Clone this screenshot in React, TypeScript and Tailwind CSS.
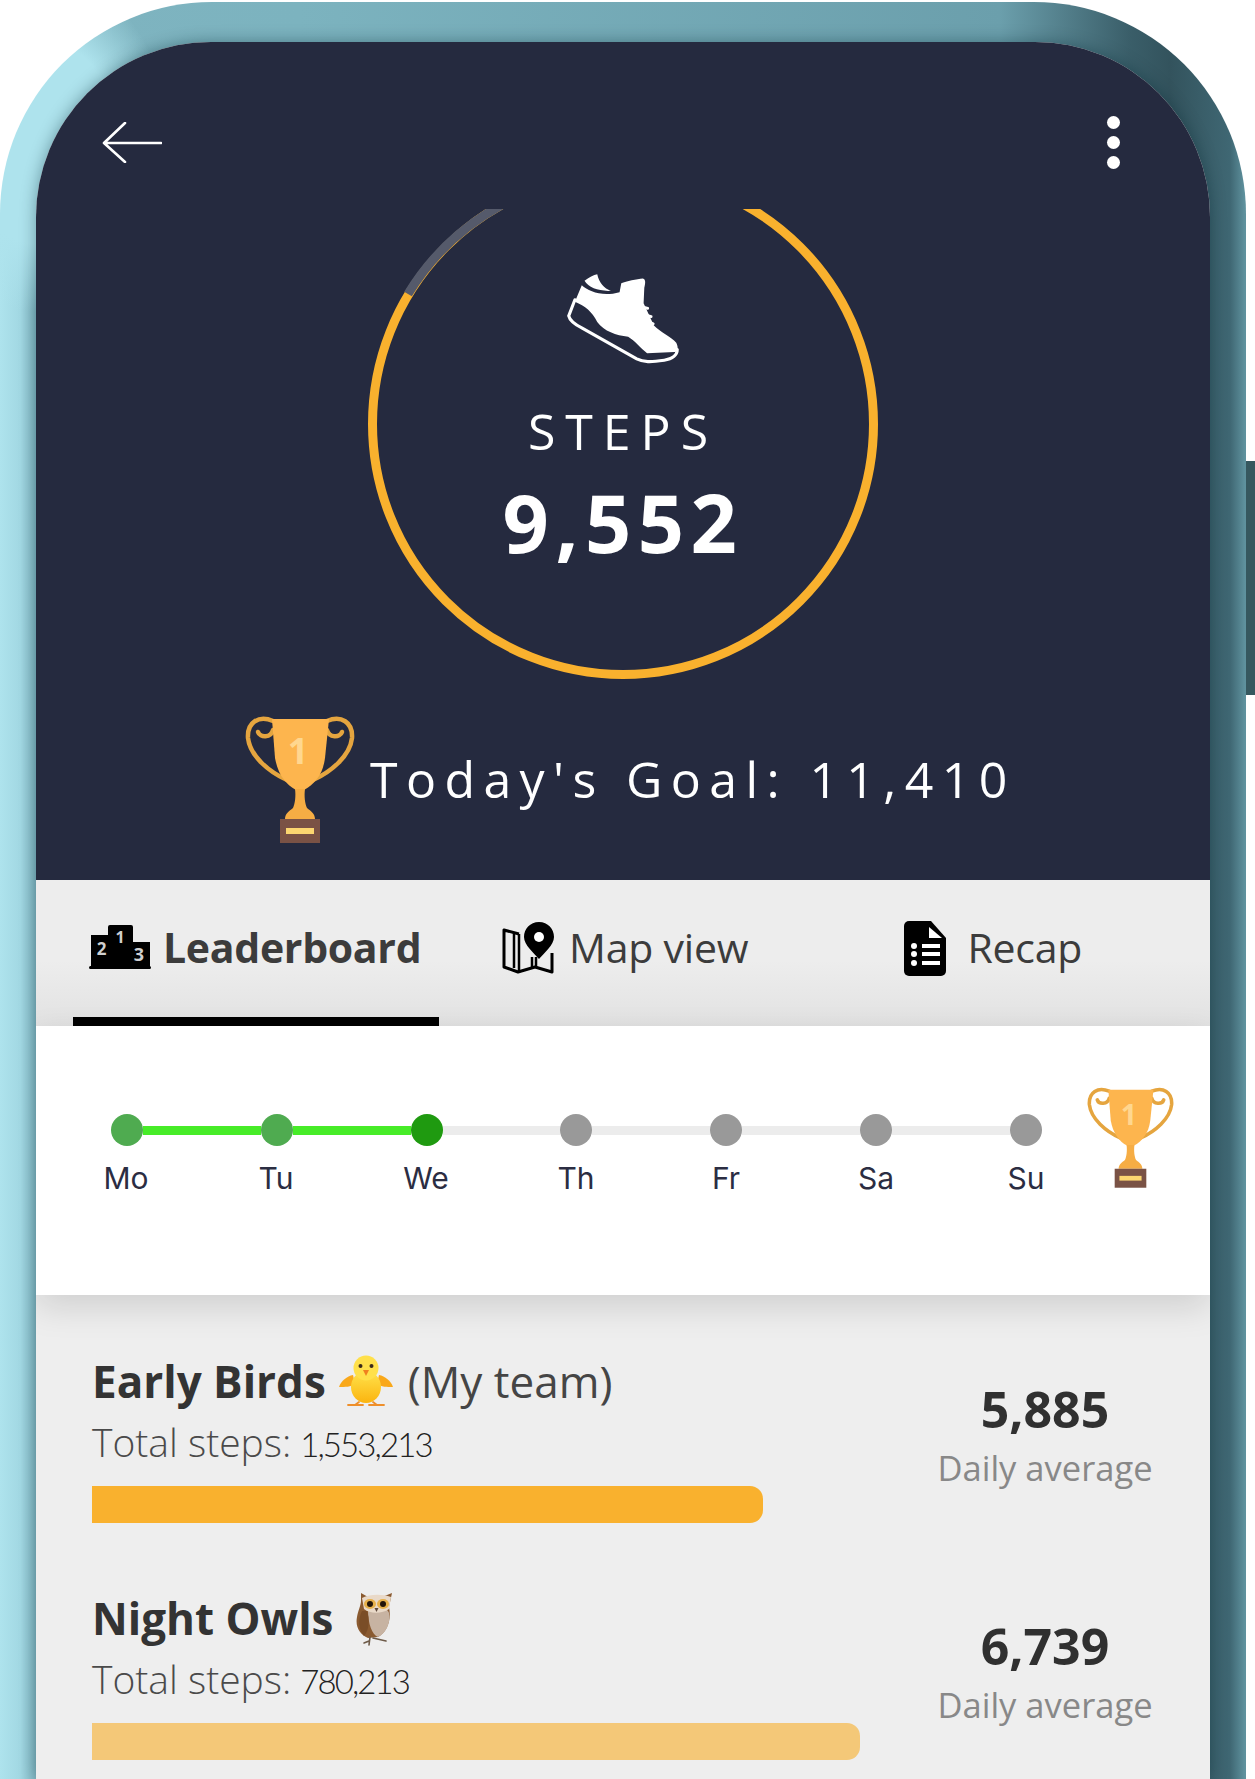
import React from "react";

function Trophy({ className }: { className?: string }) {
  return (
    <svg viewBox="0 0 110 127" className={className}>
      <g fill="none" stroke="#e5a53f" strokeWidth="4.5" strokeLinecap="round">
        <path d="M28 5 C14 -1 2 6 3 22 C5 40 24 56 42 64" />
        <path d="M28 14 C26 22 15 22 13 16" />
        <path d="M82 5 C96 -1 108 6 107 22 C105 40 86 56 68 64" />
        <path d="M82 14 C84 22 95 22 97 16" />
      </g>
      <path d="M27 3 H84 L80 42 C78 58 70 68 59 74 L51 74 C40 68 33 58 30 42 Z" fill="#fdb54e" />
      <path d="M50 73 H60 C59 80 60 88 62 92 C66 95 70 98 70 103 H40 C40 98 44 95 48 92 C50 88 51 80 50 73 Z" fill="#f6ad44" />
      <rect x="35" y="103" width="40" height="24" fill="#7a5245" />
      <rect x="41" y="112" width="28" height="6" fill="#fcd670" />
      <text x="53" y="48" textAnchor="middle" fontSize="36" fontWeight="700" fontFamily="'Open Sans',sans-serif" fill="#ffd78f">1</text>
    </svg>
  );
}

function Shoe() {
  return (
    <svg viewBox="618 225 324 262" className="w-[116px] h-[90px] -my-[1px] overflow-visible">
      <path d="M668 245 C680 235 695 228 705 226 C710 250 725 268 745 274 C710 276 680 265 668 245 Z" fill="#fff" />
      <path d="M660 258 C680 276 720 292 770 278 L775 252 C790 245 820 240 838 238 C846 240 846 250 842 265 L840 310 L870 375 C890 395 920 408 935 425 C942 440 940 450 930 452 L850 456 C830 440 815 420 795 408 C760 404 725 392 705 365 C690 335 670 318 640 306 Z" fill="#fff" />
      <path d="M640 300 L622 347 C625 360 640 372 660 382 L820 472 C840 482 860 482 900 476 C925 473 938 460 938 445" fill="none" stroke="#fff" strokeWidth="9" strokeLinecap="round" />
      <g stroke="#fff" strokeWidth="8" strokeLinecap="round">
        <path d="M828 318 L852 325" />
        <path d="M838 342 L862 349" />
        <path d="M848 362 L868 370" />
      </g>
    </svg>
  );
}

function Podium() {
  return (
    <svg viewBox="0 0 62 44" className="w-[62px] h-[44px] shrink-0">
      <path d="M19 2 a2 2 0 0 1 2-2 H42 a2 2 0 0 1 2 2 V17 H61 V42 H2 V10 H19 Z" fill="#000" />
      <rect x="0" y="41" width="62" height="3" rx="1.5" fill="#000" />
      <g fontFamily="'Open Sans',sans-serif" fontWeight="700" fill="#d0d0d0" textAnchor="middle">
        <text x="12.5" y="30" fontSize="17">2</text>
        <text x="31" y="18" fontSize="16">1</text>
        <text x="50" y="36" fontSize="18">3</text>
      </g>
    </svg>
  );
}

function MapPin() {
  return (
    <svg viewBox="0 0 52 53" className="w-[52px] h-[53px] shrink-0">
      <path d="M17 13 L2 9 V46 L16 51 L33 46 L50 51 V32" fill="none" stroke="#000" strokeWidth="3" strokeLinejoin="round" />
      <path d="M12 12 V47 M17 13 V50 M30 36 V46 M34 36 V46" fill="none" stroke="#000" strokeWidth="2.5" />
      <path d="M37 1 C28 1 22 8 22 16 C22 24 32 32 37 38 C42 32 52 24 52 16 C52 8 46 1 37 1 Z" fill="#000" />
      <circle cx="37" cy="16" r="5" fill="#fff" />
    </svg>
  );
}

function DocIcon() {
  return (
    <svg viewBox="0 0 42 55" className="w-[42px] h-[55px] shrink-0">
      <path d="M5 0 H27 L42 17 V50 a5 5 0 0 1 -5 5 H5 a5 5 0 0 1 -5 -5 V5 a5 5 0 0 1 5 -5 Z" fill="#000" />
      <path d="M25 6 L38 17 L25 17 Z" fill="#fff" />
      <g fill="#fff">
        <circle cx="10" cy="25" r="3" />
        <circle cx="10" cy="33" r="3" />
        <circle cx="10" cy="42" r="3" />
        <rect x="18" y="23" width="18" height="4" />
        <rect x="18" y="31" width="18" height="4" />
        <rect x="18" y="40" width="18" height="4" />
      </g>
    </svg>
  );
}

function Chick() {
  return (
    <svg viewBox="0 0 54 52" className="w-[54px] h-[52px] shrink-0">
      <defs>
        <linearGradient id="chickBody" x1="0" y1="0" x2="0" y2="1">
          <stop offset="0" stopColor="#ffe34d" />
          <stop offset="1" stopColor="#fbb40f" />
        </linearGradient>
      </defs>
      <path d="M20 47 L16 50 M34 47 L38 50 M9 50 H24 M30 50 H45" stroke="#ee8f2b" strokeWidth="1.8" strokeLinecap="round" />
      <path d="M14 20 C8 21 2 26 0 32 C6 32 12 32 16 29 Z" fill="#f9a81a" />
      <path d="M40 20 C46 21 52 26 54 32 C48 32 42 32 38 29 Z" fill="#f9a81a" />
      <ellipse cx="27" cy="32" rx="15" ry="16" fill="url(#chickBody)" />
      <ellipse cx="27" cy="13" rx="12.5" ry="12.5" fill="#ffe04a" />
      <circle cx="21.5" cy="11" r="2" fill="#3b2a1a" />
      <circle cx="32.5" cy="11" r="2" fill="#3b2a1a" />
      <path d="M24 15 H30 L27 21 Z" fill="#f0801f" />
    </svg>
  );
}

function Owl() {
  return (
    <svg viewBox="0 0 38 55" className="w-[38px] h-[55px] shrink-0">
      <path d="M5 2 L12 6 H26 L36 2 L33 16 C36 30 30 42 22 46 L12 47 C4 44 -1 36 1 26 C2 20 5 14 5 10 Z" fill="#8a5a30" />
      <path d="M12 20 C20 16 32 16 33 22 C35 32 30 42 22 46 C16 44 12 32 12 20 Z" fill="#c7b3a2" />
      <path d="M6 7 C14 3 26 3 35 6 L33 18 C26 23 14 23 8 18 Z" fill="#e9d9c8" />
      <ellipse cx="14" cy="13" rx="6" ry="5" fill="#e6b04a" />
      <ellipse cx="27" cy="13" rx="6" ry="5" fill="#e6b04a" />
      <circle cx="14" cy="13" r="3" fill="#221408" />
      <circle cx="27" cy="13" r="3" fill="#221408" />
      <path d="M18.5 17 H22.5 L20.5 21 Z" fill="#5c4638" />
      <path d="M6 20 C2 28 2 38 8 45 C13 40 14 28 11 20 Z" fill="#7a4d27" />
      <path d="M14 46 L13 54 M13 50 L8 52 M17 47 L30 50" stroke="#6d5a48" strokeWidth="1.6" strokeLinecap="round" />
    </svg>
  );
}

const days = [
  { label: "Mo", dot: "bg-[#4fab50]", line: "bg-[#47ec28]" },
  { label: "Tu", dot: "bg-[#4fab50]", line: "bg-[#47ec28]" },
  { label: "We", dot: "bg-[#1f9a10]", line: "bg-[#ececec]" },
  { label: "Th", dot: "bg-[#999999]", line: "bg-[#ececec]" },
  { label: "Fr", dot: "bg-[#999999]", line: "bg-[#ececec]" },
  { label: "Sa", dot: "bg-[#999999]", line: "bg-[#ececec]" },
  { label: "Su", dot: "bg-[#999999]", line: "" },
];

function Team({
  name,
  emoji,
  suffix,
  total,
  avg,
  barClass,
  emojiClass,
}: {
  name: string;
  emoji: React.ReactNode;
  suffix?: string;
  total: string;
  avg: string;
  barClass: string;
  emojiClass: string;
}) {
  return (
    <div className="flex justify-between pl-[56px] pr-[55px] mb-[69px]">
      <div>
        <div className="flex items-center h-[52px] text-[44px] leading-[52px] text-[#333333]">
          <span className="font-bold">{name}</span>
          <span className={emojiClass}>{emoji}</span>
          {suffix && <span className="ml-[15px] text-[#454545]">{suffix}</span>}
        </div>
        <div className="mt-[13px] h-[44px] text-[39px] leading-[44px] text-[#4a4a4a] font-light flex items-baseline">
          <span>Total steps:</span>
          <span className="ml-[9px] font-['Lato',sans-serif] font-light text-[33px] text-[#222222] tracking-[-1.9px]">{total}</span>
        </div>
        <div className={`mt-[22px] h-[37px] rounded-r-[13px] ${barClass}`} />
      </div>
      <div className="w-[220px] text-center pt-[30px]">
        <div className="text-[50px] leading-[49px] font-bold text-[#303030]">{avg}</div>
        <div className="mt-[12px] text-[34.5px] leading-[44px] text-[#888888]">Daily average</div>
      </div>
    </div>
  );
}

export default function App() {
  return (
    <div className="relative w-[1255px] h-[1779px] overflow-hidden bg-white font-['Open_Sans',sans-serif]">
      <div className="absolute right-0 top-[461px] w-[9px] h-[234px] bg-[#36585f]" />
      <div className="w-[1246px] h-[1779px] mt-[2px] pt-[40px] pl-[36px] rounded-t-[212px] bg-[radial-gradient(ellipse_130px_170px_at_40px_140px,#aee3ed_60%,transparent_100%),linear-gradient(90deg,#aee3ed_0px,#a2d8e3_20px,#7fb4c0_38px,#7cb3bf_300px,#6b9fac_1000px,#3a5e69_1130px,#33535d_1170px,#3f6773_1230px,#5f929e_1245px)]">
        <div className="w-[1174px] h-[1737px] rounded-t-[175px] overflow-hidden bg-[#eeeeee] shadow-[0_0_16px_rgba(0,40,50,0.4)]">
          <div className="h-[838px] bg-[#252a3f] relative pt-[80px]">
            <div className="flex justify-between items-center h-[41px] pl-[66px] pr-[90px]">
              <svg viewBox="0 0 60 41" className="w-[60px] h-[41px]">
                <path d="M59 21 H3 M23 1 L2 21 L23 40" fill="none" stroke="#fff" strokeWidth="2.6" strokeLinecap="round" strokeLinejoin="round" />
              </svg>
              <div className="flex flex-col gap-[7px]">
                <div className="w-[13px] h-[13px] rounded-full bg-white" />
                <div className="w-[13px] h-[13px] rounded-full bg-white" />
                <div className="w-[13px] h-[13px] rounded-full bg-white" />
              </div>
            </div>
            <div className="relative mt-[46px] ml-[332px] w-[510px] h-[471px] flex flex-col items-center pt-[66px] text-white">
              <svg viewBox="0 0 510 471" className="absolute inset-0 w-[510px] h-[471px]">
                <circle cx="255" cy="215" r="250.5" fill="none" stroke="#f9b12e" strokeWidth="9" />
                <path d="M40 85 A250.5 250.5 0 0 1 133.4 -4" fill="none" stroke="#555a6b" strokeWidth="9" />
              </svg>
              <Shoe />
              <div className="mt-[43px] text-[50px] leading-[50px] tracking-[10px] font-medium">STEPS</div>
              <div className="mt-[25px] text-[81px] leading-[81px] tracking-[6.5px] font-bold">9,552</div>
            </div>
            <div className="flex items-start mt-[36px] ml-[209px]">
              <Trophy className="w-[110px] h-[127px] shrink-0" />
              <div className="ml-[15px] mt-[38px] text-[50px] leading-[50px] tracking-[8.4px] text-white font-medium whitespace-nowrap">
                Today's Goal: 11,410
              </div>
            </div>
          </div>

          <div className="flex h-[146px] bg-[linear-gradient(180deg,#ededed_0%,#ededed_55%,#e2e2e2_100%)] text-[41px] leading-[40px] text-[#3c3c3c]">
            <div className="ml-[37px] w-[366px] h-[146px] pl-[16px] pt-[45px] border-b-[9px] border-black flex items-start gap-[12px]">
              <Podium />
              <span className="font-bold tracking-[-0.3px] mt-[2px]">Leaderboard</span>
            </div>
            <div className="ml-[63px] pt-[41px] flex items-start gap-[15px]">
              <MapPin />
              <span className="mt-[6px] tracking-[-0.2px]">Map view</span>
            </div>
            <div className="ml-[156px] pt-[41px] flex items-start gap-[21px]">
              <DocIcon />
              <span className="mt-[6px] tracking-[-0.2px]">Recap</span>
            </div>
          </div>

          <div className="relative z-10 h-[269px] bg-white shadow-[0_12px_32px_rgba(0,0,0,0.13)] flex items-start">
            <div className="w-[1051px] ml-[15px] mt-[88px] shrink-0">
              <div className="flex items-center ml-[60px] w-[931px]">
                {days.map((d) => (
                  <React.Fragment key={d.label}>
                    <div className={`w-[32px] h-[32px] rounded-full shrink-0 ${d.dot}`} />
                    {d.line && <div className={`h-[9px] flex-1 ${d.line}`} />}
                  </React.Fragment>
                ))}
              </div>
              <div className="grid grid-cols-[repeat(7,150px)] mt-[14px]">
                {days.map((d) => (
                  <div key={d.label} className="text-center font-['Inter',sans-serif] font-normal text-[30px] leading-[36px] text-[#2b2d42]">
                    {d.label}
                  </div>
                ))}
              </div>
            </div>
            <Trophy className="w-[87px] h-[101px] shrink-0 -ml-[15px] mt-[61px]" />
          </div>

          <div className="pt-[60px]">
            <Team name="Early Birds" emoji={<Chick />} emojiClass="ml-[13px]" suffix="(My team)" total="1,553,213" avg="5,885" barClass="w-[671px] bg-[#f9b12e]" />
            <Team name="Night Owls" emoji={<Owl />} emojiClass="ml-[23px]" total="780,213" avg="6,739" barClass="w-[768px] bg-[#f4c878]" />
          </div>
        </div>
      </div>
    </div>
  );
}
